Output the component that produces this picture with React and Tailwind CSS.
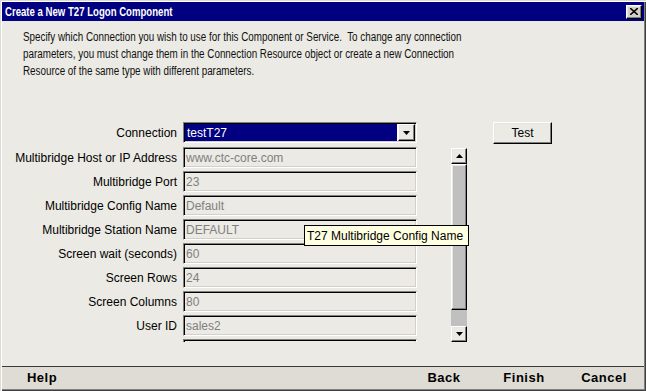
import React from "react";

const font = { fontFamily: '"Liberation Sans", Arial, sans-serif' };

const rows = [
  { label: "Multibridge Host or IP Address", value: "www.ctc-core.com" },
  { label: "Multibridge Port", value: "23" },
  { label: "Multibridge Config Name", value: "Default" },
  { label: "Multibridge Station Name", value: "DEFAULT" },
  { label: "Screen wait (seconds)", value: "60" },
  { label: "Screen Rows", value: "24" },
  { label: "Screen Columns", value: "80" },
  { label: "User ID", value: "sales2" },
  { label: "", value: "" },
];

const intro = [
  "Specify which Connection you wish to use for this Component or Service.\u00a0 To change any connection",
  "parameters, you must change them in the Connection Resource object or create a new Connection",
  "Resource of the same type with different parameters.",
];

const sunken =
  "border border-t-[#808080] border-l-[#808080] border-r-white border-b-white shadow-[inset_1px_1px_0_#000,inset_-1px_-1px_0_#d4d0c8]";
const raised =
  "border border-t-white border-l-white border-r-black border-b-black shadow-[inset_-1px_-1px_0_#808080,inset_1px_1px_0_#e8e6e0]";

function Arrow({ up }) {
  return (
    <svg width="7" height="4" viewBox="0 0 7 4">
      <path d={up ? "M3.5 0 L7 4 L0 4 Z" : "M0 0 L7 0 L3.5 4 Z"} fill="#000" />
    </svg>
  );
}

export default function App() {
  return (
    <div
      className="relative w-[646px] h-[391px] p-[2px] bg-[#ebeae4] text-black text-[12px] flex flex-col shadow-[inset_1px_1px_0_#dcdad4,inset_2px_2px_0_#fff,inset_-1px_-1px_0_#404040,inset_-2px_-2px_0_#808080]"
      style={font}
    >
      {/* Title bar */}
      <div className="h-[19px] bg-[#000080] flex items-center justify-between pl-[3px] pr-[2px]">
        <span className="inline-block origin-left scale-x-[0.8] text-white font-bold text-[12px] whitespace-nowrap">
          Create a New T27 Logon Component
        </span>
        <div className={`w-[16px] h-[14px] bg-[#d4d0c8] flex items-center justify-center ${raised}`}>
          <svg width="8" height="7" viewBox="0 0 8 7">
            <path d="M0 0 L8 7 M8 0 L0 7" stroke="#000" strokeWidth="1.6" />
          </svg>
        </div>
      </div>

      {/* Body */}
      <div className="flex-1 flex flex-col">
        <div className="pl-[21px] pt-[8px] flex flex-col text-[12px] leading-[17px] text-[#111]">
          {intro.map((line) => (
            <span key={line} className="block origin-left scale-x-[0.82] whitespace-nowrap">
              {line}
            </span>
          ))}
        </div>

        {/* Connection row */}
        <div className="flex items-start mt-[42px]">
          <div className="w-[175px] h-[21px] flex items-center justify-end">Connection</div>
          <div className={`ml-[6px] w-[234px] h-[21px] flex ${sunken} bg-white`}>
            <div className="flex-1 m-[1px] bg-[#000080] text-white flex items-center pl-[2px]">testT27</div>
            <div className={`w-[17px] h-[17px] mt-[1px] mr-[1px] bg-[#ebeae4] flex items-center justify-center ${raised}`}>
              <Arrow />
            </div>
          </div>
          <button className={`ml-[76px] w-[59px] h-[22px] bg-[#ebeae4] flex items-center justify-center text-[12px] ${raised}`}>
            Test
          </button>
        </div>

        {/* Scroll area */}
        <div className="flex mt-[3px]">
          <div className="w-[415px] h-[195px] overflow-hidden flex flex-col gap-[3px]">
            {rows.map((r, i) => (
              <div key={i} className="flex items-center shrink-0">
                <div className="w-[175px] h-[21px] flex items-center justify-end whitespace-nowrap">{r.label}</div>
                <div className={`ml-[6px] w-[234px] h-[21px] flex items-center pl-[2px] text-[#808080] ${sunken}`}>
                  {r.value}
                </div>
              </div>
            ))}
          </div>
          <div className="ml-[34px] mt-[1px] w-[16px] h-[194px] flex flex-col bg-[#c0c0c0]">
            <div className={`h-[16px] bg-[#ebeae4] flex items-center justify-center ${raised}`}>
              <Arrow up />
            </div>
            <div className={`h-[146px] bg-[#c0c0c0] ${raised}`} />
            <div className="flex-1" />
            <div className={`h-[16px] bg-[#ebeae4] flex items-center justify-center ${raised}`}>
              <Arrow />
            </div>
          </div>
        </div>
      </div>

      {/* Bottom bar */}
      <div className="h-[23px] border-t border-[#3c3c3c] bg-[#dedcd4] flex items-center justify-between font-bold text-[13px] tracking-[0.5px]">
        <div className="w-[80px] text-center">Help</div>
        <div className="flex">
          <div className="w-[80px] text-center">Back</div>
          <div className="w-[80px] text-center">Finish</div>
          <div className="w-[80px] text-center">Cancel</div>
        </div>
      </div>

      {/* Tooltip */}
      <div className="absolute left-[304px] top-[225px] w-[165px] h-[21px] bg-[#ffffe1] border border-black flex items-center pl-[2px] whitespace-nowrap">
        T27 Multibridge Config Name
      </div>
    </div>
  );
}
